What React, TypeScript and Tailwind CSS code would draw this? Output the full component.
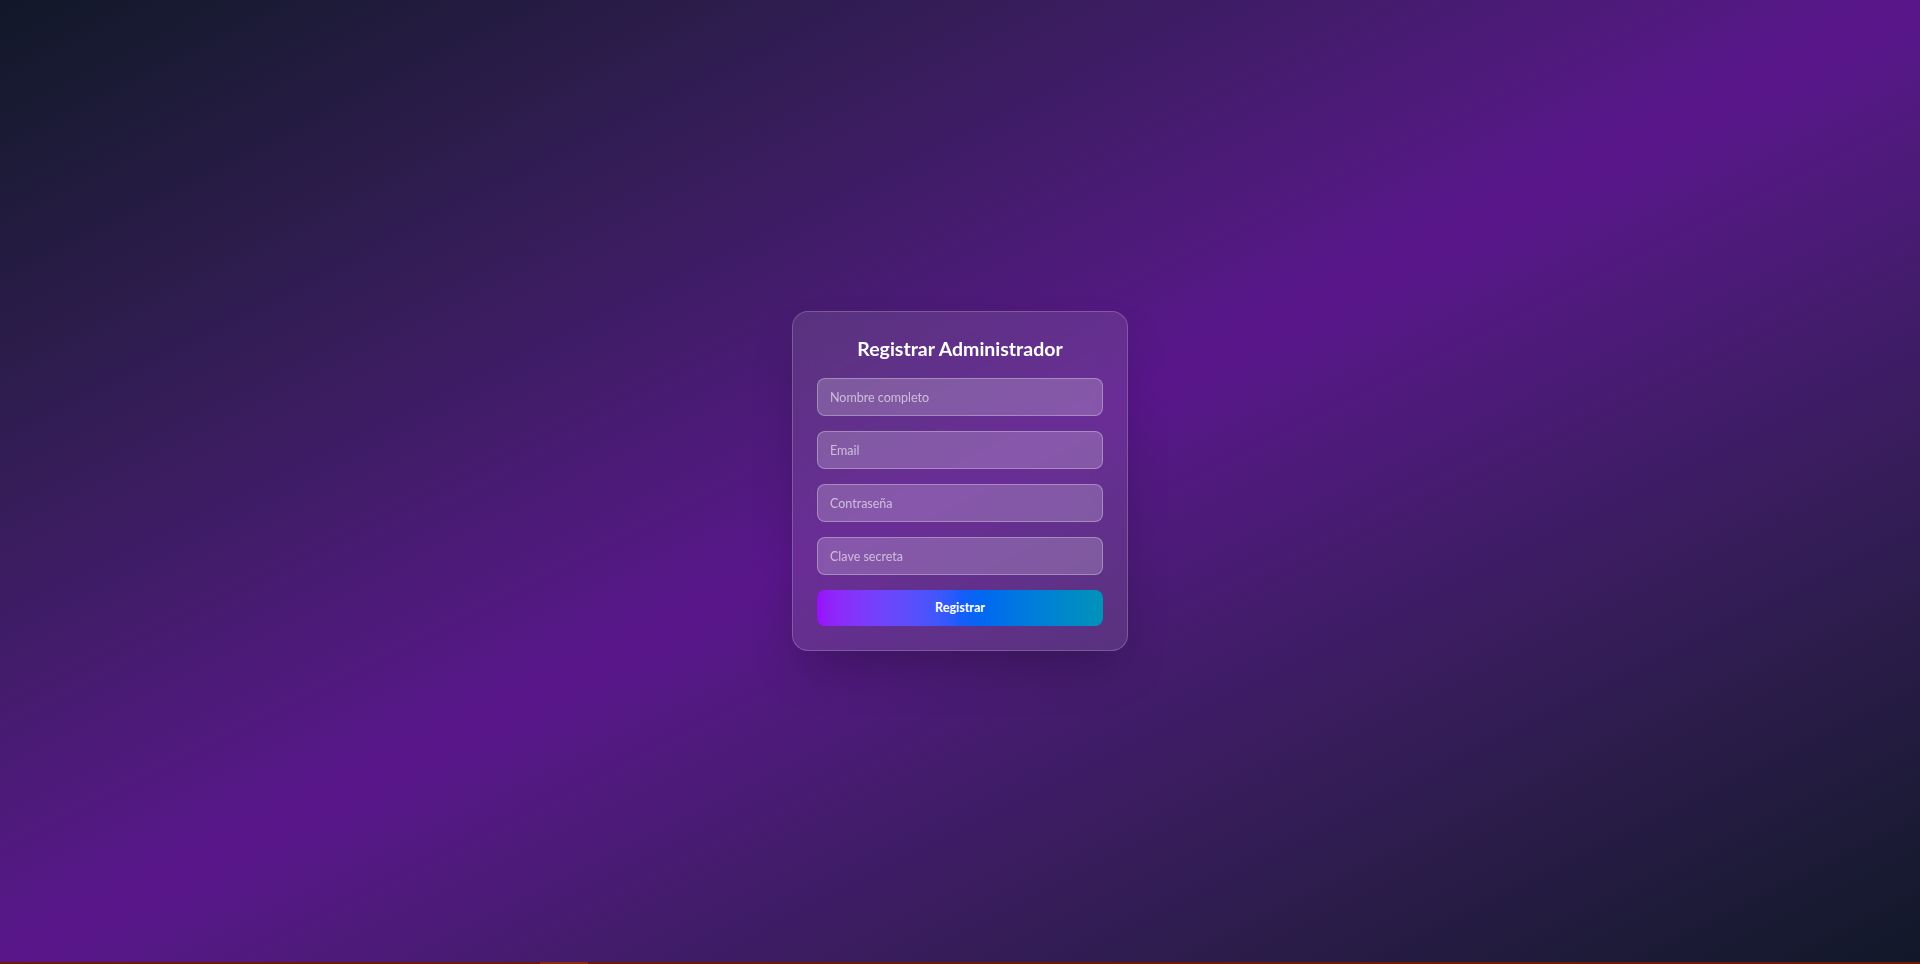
import { useState } from "react";

export default function App() {
  const [form, setForm] = useState({ nombre: "", email: "", password: "", clave: "" });

  const fields: { key: keyof typeof form; type: string; placeholder: string }[] = [
    { key: "nombre", type: "text", placeholder: "Nombre completo" },
    { key: "email", type: "email", placeholder: "Email" },
    { key: "password", type: "password", placeholder: "Contraseña" },
    { key: "clave", type: "password", placeholder: "Clave secreta" },
  ];

  return (
    <div
      className="h-screen flex flex-col bg-gradient-to-br from-gray-900 via-purple-900 to-gray-900 overflow-hidden"
      style={{ fontFamily: 'Lato, "Noto Sans", sans-serif' }}
    >
      <div className="flex-1 flex items-center justify-center">
        <form
          onSubmit={(e) => e.preventDefault()}
          className="w-[336px] p-6 bg-white/10 backdrop-blur-lg border border-white/20 rounded-2xl shadow-2xl"
        >
          <h2 className="h-7 mb-[14px] text-[19.5px] leading-[26px] font-bold text-white text-center">
            Registrar Administrador
          </h2>
          <div className="flex flex-col gap-[15px]">
            {fields.map((f) => (
              <input
                key={f.key}
                type={f.type}
                value={form[f.key]}
                onChange={(e) => setForm((prev) => ({ ...prev, [f.key]: e.target.value }))}
                placeholder={f.placeholder}
                className="w-full h-[38px] px-3 bg-white/20 border border-white/30 rounded-lg text-[12.5px] text-white placeholder:text-white/60 focus:outline-none"
              />
            ))}
            <button
              type="submit"
              className="w-full h-9 rounded-lg bg-gradient-to-r from-purple-600 via-blue-600 to-cyan-600 text-white text-[12.5px] font-bold"
            >
              Registrar
            </button>
          </div>
        </form>
      </div>
      <div className="h-[2px] flex bg-[#6b1a08]">
        <div className="w-[540px]" />
        <div className="w-[48px] bg-[#8a2a0c]" />
      </div>
    </div>
  );
}
